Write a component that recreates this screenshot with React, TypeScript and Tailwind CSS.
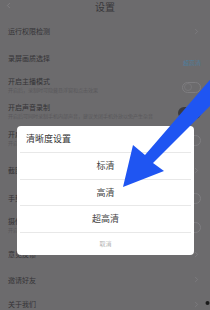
import { ChevronLeft, ChevronRight } from 'lucide-react'

type Trailing = 'chevron' | 'toggle' | 'toggleOn' | 'value'

type Row = {
  label: string
  sub?: string
  trailing: Trailing
  h: string
}

const ROWS: Row[] = [
  { label: '运行权限检测', trailing: 'chevron', h: 'h-[26px]' },
  { label: '录屏画质选择', trailing: 'value', h: 'h-[28px]' },
  { label: '开启主播模式', sub: '开启后，录制时可隐藏悬浮窗和点击效果', trailing: 'toggle', h: 'h-[26px]' },
  {
    label: '开启声音录制',
    sub: '开启后可同时录制手机内部声音，建议关闭手机外放以免产生杂音',
    trailing: 'toggleOn',
    h: 'h-[26px]',
  },
  { label: '开启悬浮窗', sub: '开启后可在录制时显示悬浮控制按钮', trailing: 'toggle', h: 'h-[28px]' },
  { label: '截图设置', trailing: 'chevron', h: 'h-[36px]' },
  { label: '手势设置', trailing: 'toggle', h: 'h-[20px]' },
  { label: '摄像头悬浮窗', sub: '开启后可同时录制前置摄像头画面', trailing: 'toggle', h: 'h-[34px]' },
  { label: '意见反馈', trailing: 'chevron', h: 'h-[24px]' },
  { label: '邀请好友', trailing: 'chevron', h: 'h-[27px]' },
  { label: '关于我们', trailing: 'chevron', h: 'h-[22px]' },
]

const OPTIONS = ['标清', '高清', '超高清']

function Toggle({ on }: { on?: boolean }) {
  if (on) {
    return (
      <div className="flex h-[12px] w-[23px] items-center justify-end rounded-full bg-[#3c3b3e] pr-[1px]">
        <div className="h-[10px] w-[10px] rounded-full border border-[#7a797c] bg-[#5a595c]" />
      </div>
    )
  }
  return (
    <div className="flex h-[11px] w-[19px] items-center rounded-full border border-[#7e7d80] pl-[1px]">
      <div className="h-[8px] w-[8px] rounded-full border border-[#78777a]" />
    </div>
  )
}

function TrailingItem({ kind }: { kind: Trailing }) {
  if (kind === 'chevron') {
    return <ChevronRight size={9} strokeWidth={1.5} className="text-[#858487]" />
  }
  if (kind === 'value') {
    return <span className="text-[6px] text-[#4f7d9c]">超高清</span>
  }
  return <Toggle on={kind === 'toggleOn'} />
}

function SettingsRow({ row }: { row: Row }) {
  return (
    <div className={`flex items-center justify-between pl-[8px] pr-[9px] ${row.h}`}>
      <div className="flex min-w-0 flex-col">
        <span className="text-[7px] leading-[10px] text-[#343336]">{row.label}</span>
        {row.sub && (
          <span className="whitespace-nowrap text-[5px] leading-[8px] text-[#59585b]">{row.sub}</span>
        )}
      </div>
      <div className={row.sub ? 'mt-[4px]' : ''}>
        <TrailingItem kind={row.trailing} />
      </div>
    </div>
  )
}

function QualityDialog() {
  return (
    <div className="absolute left-[17px] top-[126px] w-[177px] overflow-hidden rounded-[4px] bg-white">
      <div className="flex h-[26px] items-center pl-[9px] text-[9px] text-[#333333]">清晰度设置</div>
      {OPTIONS.map((option) => (
        <div
          key={option}
          className="mx-[3px] flex h-[26.5px] items-center justify-center border-t border-[#e8e8e8] text-[9px] text-[#444444]"
        >
          {option}
        </div>
      ))}
      <div className="mx-[3px] flex h-[23px] items-center justify-center border-t border-[#e8e8e8] text-[6px] text-[#b4b4b4]">
        取消
      </div>
    </div>
  )
}

function PointerArrow() {
  return (
    <svg className="pointer-events-none absolute inset-0" width={210} height={310} viewBox="0 0 210 310">
      <polygon points="123,187 133,145 145,155 214,75 228,88 153,163 164,171" fill="#1f55f2" />
      <circle cx={207.5} cy={303} r={2} fill="#1a1a1a" />
    </svg>
  )
}

export default function App() {
  return (
    <div className="relative h-[310px] w-[210px] overflow-hidden bg-[#6c6b6d] font-['Noto_Sans_CJK_SC',sans-serif]">
      <div className="relative flex h-[18px] items-start justify-center">
        <ChevronLeft size={9} strokeWidth={1.5} className="absolute left-[4px] top-[1px] text-[#8c8b8e]" />
        <span className="text-[10px] leading-[14px] text-[#38373a]">设置</span>
      </div>

      {ROWS.map((row) => (
        <SettingsRow key={row.label} row={row} />
      ))}

      <QualityDialog />
      <PointerArrow />
    </div>
  )
}
